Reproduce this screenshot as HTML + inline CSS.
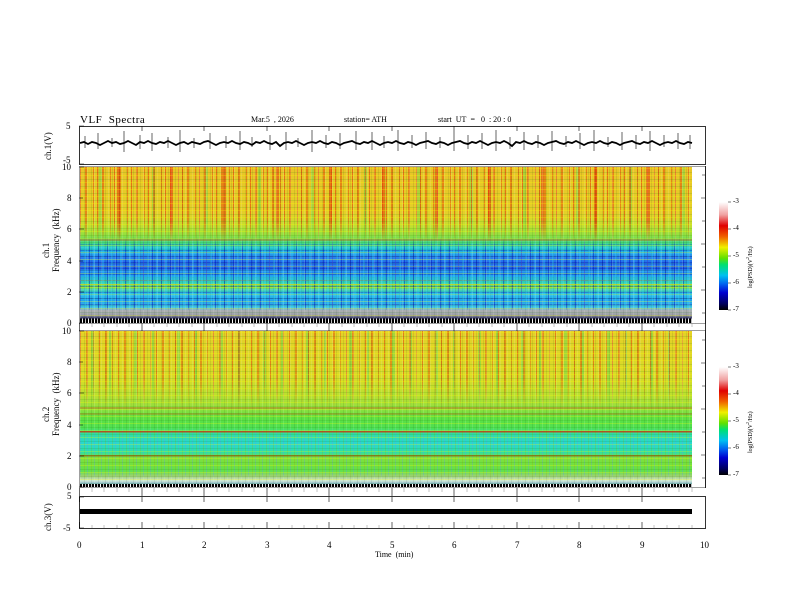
<!DOCTYPE html>
<html><head><meta charset="utf-8"><style>
html,body{margin:0;padding:0;background:#fff;}
body{width:792px;height:612px;position:relative;overflow:hidden;font-family:"Liberation Serif",serif;color:#000;}
.t{position:absolute;font-size:9px;white-space:nowrap;line-height:1;}
.spec{position:absolute;left:80px;width:612px;height:156px;overflow:hidden;}
.layer{position:absolute;left:0;top:0;width:100%;height:100%;}
.cb{position:absolute;left:719px;width:9px;height:108px;background:linear-gradient(to bottom,#fff 0%,#f0a0a0 12%,#e00000 22%,#f06000 32%,#f0f000 42%,#60e000 52%,#00e070 58%,#00c0f0 68%,#0060f0 76%,#0000d0 84%,#000060 94%,#000 100%);}
.rot{position:absolute;transform:rotate(-90deg);transform-origin:left top;white-space:nowrap;font-size:9px;line-height:1;}
.noise{background:repeating-linear-gradient(0deg,rgba(255,255,0,.25) 0 1px,transparent 1px 3px,rgba(0,120,0,.12) 3px 4px,transparent 4px 7px),repeating-linear-gradient(90deg,rgba(255,255,255,.12) 0 1px,transparent 1px 4px,rgba(0,0,0,.08) 4px 5px,transparent 5px 7px);}
</style></head><body>

<div class="t" style="left:80px;top:115px;font-size:11px;letter-spacing:0.5px">VLF&nbsp; Spectra</div>
<div class="t" style="left:251px;top:116px;font-size:8px">Mar.5&nbsp; , 2026</div>
<div class="t" style="left:344px;top:116px;font-size:8px">station= ATH</div>
<div class="t" style="left:438px;top:116px;font-size:8px">start&nbsp; UT&nbsp; =&nbsp;&nbsp; 0&nbsp; : 20 : 0</div>

<div class="spec" style="top:167px;">
 <div class="layer" style="background:linear-gradient(to bottom,#e8c428 0%,#e4d028 30%,#c0e030 38%,#90e040 44%,#40d880 49%,#20c0e0 53%,#2880f0 58%,#2060e8 64%,#20a8f0 70%,#30d0b0 74%,#80e040 77%,#30c8e0 80%,#20a0f0 86%,#40c0e0 90%,#b0b0b0 92%,#9aa0a8 95%,#303060 97%,#000 100%);"></div>
 <div class="layer" style="background:repeating-linear-gradient(90deg,rgba(230,30,0,.5) 0 1px,transparent 1px 5px,rgba(230,50,0,.45) 5px 7px,transparent 7px 13px,rgba(230,30,0,.4) 13px 14px,transparent 14px 17px),repeating-linear-gradient(90deg,transparent 0 19px,rgba(90,220,80,.4) 19px 22px,transparent 22px 37px,rgba(230,20,0,.45) 37px 40px,transparent 40px 53px);-webkit-mask-image:linear-gradient(to bottom,#000 0%,#000 35%,transparent 48%);"></div>
 <div class="layer" style="background:repeating-linear-gradient(90deg,rgba(0,0,180,.4) 0 1px,transparent 1px 4px,rgba(60,220,255,.3) 4px 6px,transparent 6px 9px),repeating-linear-gradient(0deg,rgba(0,0,160,.3) 0 1px,transparent 1px 3px,rgba(80,230,255,.25) 3px 4px,transparent 4px 6px);-webkit-mask-image:linear-gradient(to bottom,transparent 45%,#000 52%,#000 90%,transparent 92%);"></div>
 <div class="layer noise"></div>
 <div class="layer" style="background:linear-gradient(to bottom,transparent 46.5%,rgba(200,60,0,.6) 46.5% 47.2%,transparent 47.2% 75%,rgba(255,220,0,.6) 75% 75.8%,transparent 75.8%);"></div>
 <div class="layer" style="background:repeating-linear-gradient(90deg,#000 0 2px,#fff 2px 3px,#000 3px 5px,#c0c0c0 5px 6px);-webkit-mask-image:linear-gradient(to bottom,transparent 97%,#000 97%);"></div>
</div>

<div class="spec" style="top:331px;">
 <div class="layer" style="background:linear-gradient(to bottom,#e4d028 0%,#d8dc28 30%,#b8e030 42%,#90e040 50%,#60e040 55%,#50e050 62%,#30e0a0 66%,#28d8d0 72%,#30e0a0 78%,#80e040 81%,#70e040 86%,#60e050 90%,#a0d070 93%,#d0e8d8 96%,#80b0c0 98%,#000 100%);"></div>
 <div class="layer" style="background:repeating-linear-gradient(90deg,rgba(230,30,0,.45) 0 1px,transparent 1px 6px,rgba(230,50,0,.4) 6px 8px,transparent 8px 13px,rgba(230,30,0,.3) 13px 14px,transparent 14px 19px),repeating-linear-gradient(90deg,transparent 0 11px,rgba(90,220,80,.45) 11px 14px,transparent 14px 29px,rgba(60,210,90,.4) 29px 31px,transparent 31px 43px);-webkit-mask-image:linear-gradient(to bottom,#000 0%,#000 30%,transparent 50%);"></div>
 <div class="layer" style="background:repeating-linear-gradient(90deg,rgba(0,80,220,.2) 0 1px,transparent 1px 4px,rgba(255,255,0,.15) 4px 5px,transparent 5px 7px);-webkit-mask-image:linear-gradient(to bottom,transparent 62%,#000 65%,#000 92%,transparent 94%);"></div>
 <div class="layer noise"></div>
 <div class="layer" style="background:linear-gradient(to bottom,transparent 49%,rgba(200,50,0,.6) 49% 49.7%,transparent 49.7% 53%,rgba(200,60,0,.5) 53% 53.6%,transparent 53.6% 64%,rgba(210,40,0,.75) 64% 65%,transparent 65% 79.5%,rgba(150,90,0,.7) 79.5% 80.5%,transparent 80.5%);"></div>
 <div class="layer" style="background:repeating-linear-gradient(90deg,#000 0 2px,#fff 2px 3px,#000 3px 5px,#c0c0c0 5px 6px);-webkit-mask-image:linear-gradient(to bottom,transparent 98%,#000 98%);"></div>
</div>

<div class="cb" style="top:202px;"></div>
<div class="cb" style="top:367px;"></div>

<svg width="792" height="612" style="position:absolute;left:0;top:0" xmlns="http://www.w3.org/2000/svg">
 <g fill="none" stroke="#000" stroke-width="0.8">
  <rect x="79.5" y="126.5" width="626" height="38"/>
  <rect x="79.5" y="166.5" width="626" height="157" stroke="#888"/>
  <rect x="79.5" y="330.5" width="626" height="157" stroke="#888"/>
  <rect x="79.5" y="496.5" width="626" height="32"/>
  <line x1="705.5" y1="166" x2="705.5" y2="488"/>
 </g>
 <path d="M80 143 L84 142 L88 144 L92 142 L96 143 L100 145 L104 143 L108 141 L112 143 L116 142 L120 144 L124 143 L128 141 L132 143 L136 145 L140 142 L144 143 L148 141 L152 143 L156 144 L160 142 L164 143 L168 141 L172 143 L176 145 L180 143 L184 142 L188 144 L192 142 L196 143 L200 144 L204 142 L208 141 L212 143 L216 145 L220 143 L224 142 L228 143 L232 141 L236 143 L240 144 L244 142 L248 143 L252 145 L256 142 L260 143 L264 141 L268 143 L272 144 L276 142 L280 146 L284 143 L288 142 L292 143 L296 141 L300 143 L304 145 L308 143 L312 142 L316 143 L320 141 L324 143 L328 144 L332 142 L336 143 L340 145 L344 143 L348 142 L352 141 L356 143 L360 144 L364 142 L368 143 L372 141 L376 143 L380 145 L384 143 L388 142 L392 143 L396 141 L400 143 L404 144 L408 142 L412 143 L416 145 L420 143 L424 142 L428 141 L432 143 L436 144 L440 142 L444 143 L448 145 L452 143 L456 142 L460 141 L464 143 L468 144 L472 142 L476 143 L480 141 L484 143 L488 145 L492 143 L496 142 L500 143 L504 141 L508 143 L512 146 L516 142 L520 143 L524 141 L528 143 L532 144 L536 142 L540 143 L544 145 L548 143 L552 142 L556 141 L560 143 L564 144 L568 142 L572 143 L576 141 L580 143 L584 145 L588 143 L592 142 L596 143 L600 141 L604 143 L608 144 L612 142 L616 143 L620 145 L624 143 L628 142 L632 141 L636 143 L640 144 L644 142 L648 143 L652 141 L656 143 L660 145 L664 143 L668 142 L672 143 L676 141 L680 143 L684 144 L688 142 L692 143" fill="none" stroke="#000" stroke-width="1.8"/>
 <path d="M85 136v12M98 133v16M112 138v9M124 131v21M140 135v14M152 133v18M168 137v11M180 130v22M194 138v10M210 133v16M226 136v12M240 131v19M252 137v10M270 135v15M286 132v18M298 138v9M312 130v22M326 135v13M340 133v16M356 131v19M372 132v18M384 136v12M398 130v21M412 135v13M426 132v17M440 137v11M454 131v20M468 135v14M482 133v16M496 130v21M510 137v12M524 132v18M538 135v13M552 131v20M566 136v11M580 133v16M594 130v21M608 137v10M622 132v18M636 135v14M650 131v20M664 135v12M678 133v16M690 135v14" stroke="#000" stroke-width="0.6" fill="none"/>
 <rect x="80" y="509" width="612" height="5" fill="#000"/>
 <g stroke="#000" stroke-width="0.6">
  <path d="M79 167h5M79 198h4M79 229h5M79 261h4M79 292h5M79 323h5 M79 331h5M79 362h4M79 393h5M79 425h4M79 456h5M79 487h5 M79 126h5M79 164h5M79 497h5M79 528h5"/>
  <path d="M705 175h-3M705 198h-4M705 221h-3M705 244h-4M705 267h-3M705 290h-4M705 313h-3 M705 340h-3M705 363h-4M705 386h-3M705 409h-4M705 432h-3M705 455h-4M705 478h-3"/>
  <path d="M79.5 528v-6M142 528v-6M204 528v-6M267 528v-6M329 528v-6M392 528v-6M454 528v-6M517 528v-6M579 528v-6M642 528v-6 M79.5 497v5M142 497v5M204 497v5M267 497v5M329 497v5M392 497v5M454 497v5M517 497v5M579 497v5M642 497v5 M79.5 488v8M142 488v8M204 488v8M267 488v8M329 488v8M392 488v8M454 488v8M517 488v8M579 488v8M642 488v8 M79.5 323v8M142 323v8M204 323v8M267 323v8M329 323v8M392 323v8M454 323v8M517 323v8M579 323v8M642 323v8 M142 126v5M204 126v5M267 126v5M329 126v5M392 126v5M454 126v5M517 126v5M579 126v5M642 126v5"/>
  <path d="M728 202h3M728 229h3M728 256h3M728 283h3M728 310h3 M728 367h3M728 394h3M728 421h3M728 448h3M728 475h3"/>
 </g>
 <g stroke="#888" stroke-width="0.5">
  <path d="M92 528v-3M104 528v-3M117 528v-3M129 528v-3M154 528v-3M167 528v-3M179 528v-3M192 528v-3M217 528v-3M229 528v-3M242 528v-3M254 528v-3M279 528v-3M292 528v-3M304 528v-3M317 528v-3M342 528v-3M354 528v-3M367 528v-3M379 528v-3M404 528v-3M417 528v-3M429 528v-3M442 528v-3M467 528v-3M479 528v-3M492 528v-3M504 528v-3M529 528v-3M542 528v-3M554 528v-3M567 528v-3M592 528v-3M604 528v-3M617 528v-3M629 528v-3M654 528v-3M667 528v-3M679 528v-3M692 528v-3"/>
  <path d="M92 323v4M104 323v4M117 323v4M129 323v4M154 323v4M167 323v4M179 323v4M192 323v4M217 323v4M229 323v4M242 323v4M254 323v4M279 323v4M292 323v4M304 323v4M317 323v4M342 323v4M354 323v4M367 323v4M379 323v4M404 323v4M417 323v4M429 323v4M442 323v4M467 323v4M479 323v4M492 323v4M504 323v4M529 323v4M542 323v4M554 323v4M567 323v4M592 323v4M604 323v4M617 323v4M629 323v4M654 323v4M667 323v4M679 323v4M692 323v4"/>
  <path d="M92 488v4M104 488v4M117 488v4M129 488v4M154 488v4M167 488v4M179 488v4M192 488v4M217 488v4M229 488v4M242 488v4M254 488v4M279 488v4M292 488v4M304 488v4M317 488v4M342 488v4M354 488v4M367 488v4M379 488v4M404 488v4M417 488v4M429 488v4M442 488v4M467 488v4M479 488v4M492 488v4M504 488v4M529 488v4M542 488v4M554 488v4M567 488v4M592 488v4M604 488v4M617 488v4M629 488v4M654 488v4M667 488v4M679 488v4M692 488v4"/>
 </g>
</svg>

<div class="t" style="left:66px;top:122px">5</div>
<div class="t" style="left:63px;top:156px">-5</div>
<div class="t" style="left:62px;top:163px">10</div>
<div class="t" style="left:67px;top:194px">8</div>
<div class="t" style="left:67px;top:225px">6</div>
<div class="t" style="left:67px;top:257px">4</div>
<div class="t" style="left:67px;top:288px">2</div>
<div class="t" style="left:67px;top:319px">0</div>
<div class="t" style="left:62px;top:327px">10</div>
<div class="t" style="left:67px;top:358px">8</div>
<div class="t" style="left:67px;top:389px">6</div>
<div class="t" style="left:67px;top:421px">4</div>
<div class="t" style="left:67px;top:452px">2</div>
<div class="t" style="left:67px;top:483px">0</div>
<div class="t" style="left:67px;top:492px">5</div>
<div class="t" style="left:63px;top:524px">-5</div>

<div class="rot" style="left:44px;top:160px">ch.1(V)</div>
<div class="rot" style="left:42px;top:258px">ch.1</div>
<div class="rot" style="left:52px;top:272px">Frequency&nbsp; (kHz)</div>
<div class="rot" style="left:42px;top:422px">ch.2</div>
<div class="rot" style="left:52px;top:436px">Frequency&nbsp; (kHz)</div>
<div class="rot" style="left:44px;top:531px">ch.3(V)</div>

<div class="t" style="left:77px;top:541px">0</div>
<div class="t" style="left:140px;top:541px">1</div>
<div class="t" style="left:202px;top:541px">2</div>
<div class="t" style="left:265px;top:541px">3</div>
<div class="t" style="left:327px;top:541px">4</div>
<div class="t" style="left:390px;top:541px">5</div>
<div class="t" style="left:452px;top:541px">6</div>
<div class="t" style="left:515px;top:541px">7</div>
<div class="t" style="left:577px;top:541px">8</div>
<div class="t" style="left:640px;top:541px">9</div>
<div class="t" style="left:700px;top:541px">10</div>
<div class="t" style="left:375px;top:551px;font-size:8px">Time&nbsp; (min)</div>

<div class="t" style="left:733px;top:198px;font-size:7px">-3</div>
<div class="t" style="left:733px;top:225px;font-size:7px">-4</div>
<div class="t" style="left:733px;top:252px;font-size:7px">-5</div>
<div class="t" style="left:733px;top:279px;font-size:7px">-6</div>
<div class="t" style="left:733px;top:306px;font-size:7px">-7</div>
<div class="t" style="left:733px;top:363px;font-size:7px">-3</div>
<div class="t" style="left:733px;top:390px;font-size:7px">-4</div>
<div class="t" style="left:733px;top:417px;font-size:7px">-5</div>
<div class="t" style="left:733px;top:444px;font-size:7px">-6</div>
<div class="t" style="left:733px;top:471px;font-size:7px">-7</div>
<div class="rot" style="left:746px;top:288px;font-size:6px">log(PSD)(V<sup style="font-size:4px">2</sup>/Hz)</div>
<div class="rot" style="left:746px;top:453px;font-size:6px">log(PSD)(V<sup style="font-size:4px">2</sup>/Hz)</div>

</body></html>
